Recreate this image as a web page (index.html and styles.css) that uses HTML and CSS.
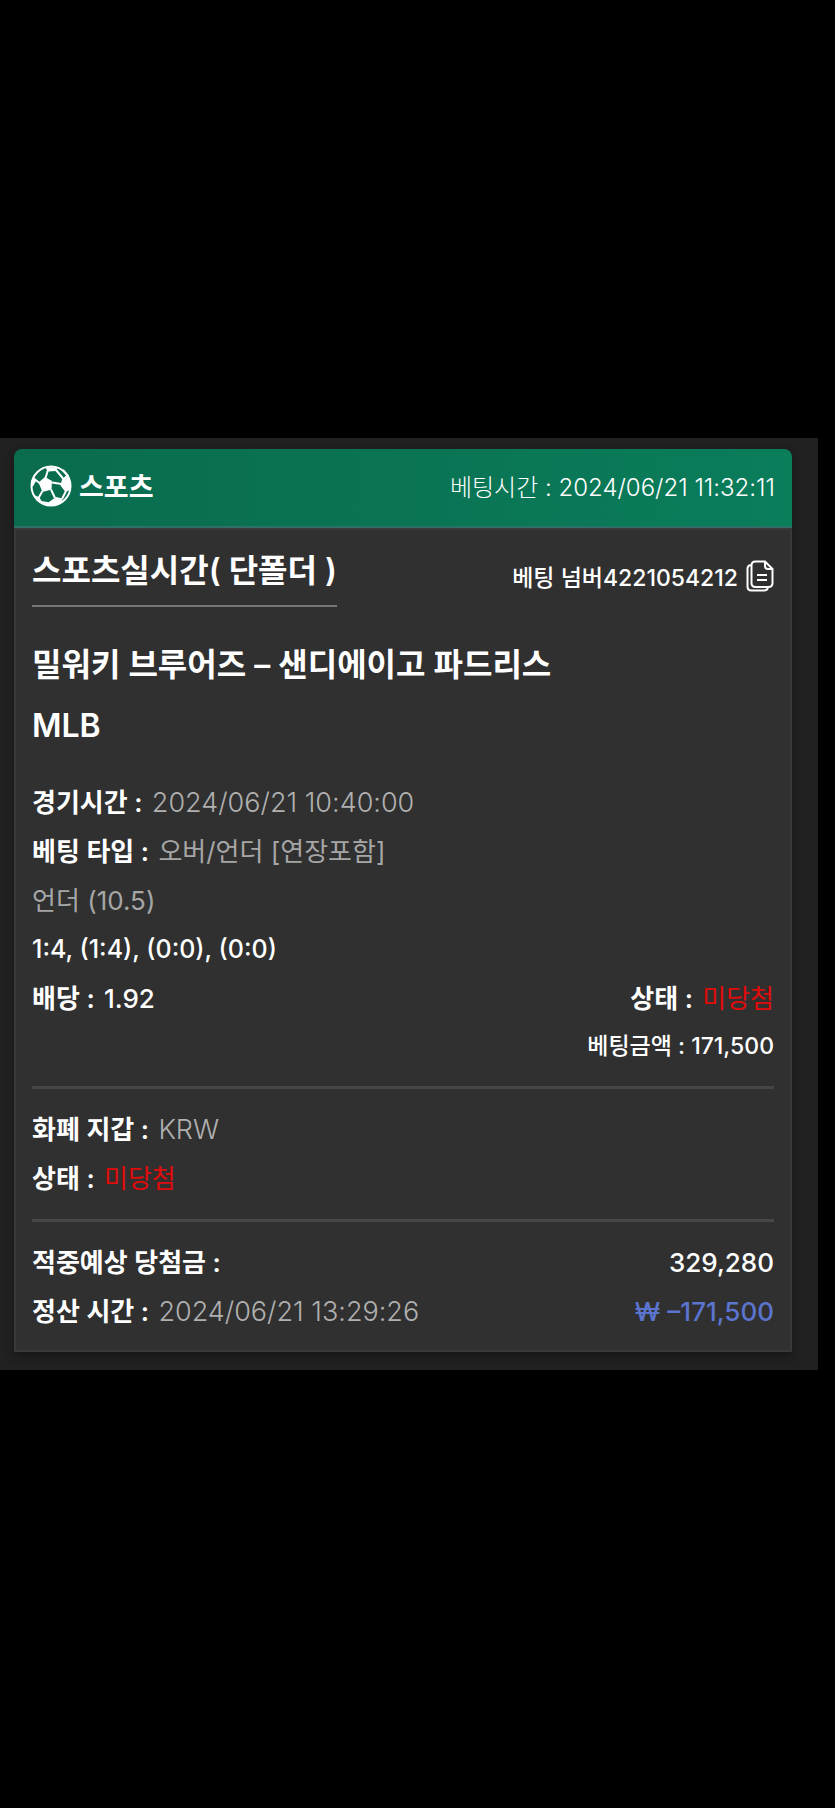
FILE: index.html
```html
<!DOCTYPE html>
<html lang="ko">
<head>
<meta charset="utf-8">
<meta name="viewport" content="width=device-width, initial-scale=1">
<title>베팅 내역</title>
<link rel="stylesheet" href="styles.css">
</head>
<body>
<main class="panel">
  <article class="card">
    <header class="card-header">
      <div class="sport">
        <svg class="ball" viewBox="0 0 42 42" aria-hidden="true">
          <circle class="ball-line" cx="21" cy="21" r="19.5"/>
          <path class="ball-fill" d="M8.500 17.500 15 12 22 16 21.500 24.500 12.500 27zM15 2 28 2.500 26 6 18 6.500zM32 14.500 37.500 9 41 18 40 25 35.500 27 30.500 20.500zM19 37 26 32 32.500 33.500 31 38 22 41 17 40.500zM1 16 4 12 6.500 15 3.500 20.500 1 23zM4 30 9.500 32.500 13 38.500 7 36z"/>
          <path class="ball-line" d="M15.500 13 18 5M22 17.500 31.500 19M21 24.500 25 33M12.500 26 8.500 33M9.500 18 5 14.500M26 5 33.500 14M33 5 38 11M36 26 32 34M11 37 20 38.500"/>
        </svg>
        <span class="sport-name">스포츠</span>
      </div>
      <time class="bet-time">베팅시간 : 2024/06/21 11:32:11</time>
    </header>
    <div class="card-body">
      <div class="heading">
        <h1 class="bet-kind">스포츠실시간( 단폴더 )</h1>
        <div class="bet-number">
          <span>베팅 넘버4221054212</span>
          <button class="copy" type="button" aria-label="복사">
            <svg class="copy-icon" viewBox="0 0 28 32" aria-hidden="true">
              <path d="M9.500 1.500H19L26.500 9V23Q26.500 27 22.500 27H9.500Q5.500 27 5.500 23V5.500Q5.500 1.500 9.500 1.500zM19 1.500V6Q19 9 22 9H26.500M5.500 5Q1.500 5 1.500 9V26.500Q1.500 30.500 5.500 30.500H18Q21.500 30.500 22 27M11 15H21M11 20H21"/>
            </svg>
          </button>
        </div>
      </div>
      <section class="match">
        <h2 class="match-line">밀워키 브루어즈 – 샌디에이고 파드리스</h2>
        <p class="match-line">MLB</p>
      </section>
      <section class="rows">
        <p><b class="label">경기시간 :</b> <time class="value">2024/06/21 10:40:00</time></p>
        <p><b class="label">베팅 타입 :</b> 오버/언더 [연장포함]</p>
        <p>언더 (10.5)</p>
        <p class="score"><b>1:4, (1:4), (0:0), (0:0)</b></p>
        <div class="split">
          <p><b class="label">배당 :</b> <b>1.92</b></p>
          <p><b class="label">상태 :</b> <span class="lost">미당첨</span></p>
        </div>
        <p class="amount"><b>베팅금액 : 171,500</b></p>
      </section>
      <hr class="divider">
      <section class="rows">
        <p><b class="label">화폐 지갑 :</b> <span class="value">KRW</span></p>
        <p><b class="label">상태 :</b> <span class="lost">미당첨</span></p>
      </section>
      <hr class="divider">
      <section class="rows">
        <div class="split">
          <p><b class="label">적중예상 당첨금 :</b></p>
          <p><b>329,280</b></p>
        </div>
        <div class="split">
          <p><b class="label">정산 시간 :</b> <time class="value">2024/06/21 13:29:26</time></p>
          <p><b class="result">₩ –171,500</b></p>
        </div>
      </section>
    </div>
  </article>
</main>
</body>
</html>
```
FILE: styles.css
```css
* {
  box-sizing: border-box;
}

body {
  margin: 0;
  min-height: 100vh;
  display: flex;
  flex-direction: column;
  justify-content: center;
  background: #000;
  color: #fff;
  font-family: Inter, "Noto Sans CJK KR", sans-serif;
  font-size: 26px;
}

h1,
h2,
p {
  margin: 0;
}

.panel {
  margin-right: 17px;
  padding: 11px 26px 18px 14px;
  background: #212121;
}

.card {
  border-radius: 8px 8px 0 0;
  box-shadow: 0 4px 8px #17171b;
}

.card-header {
  display: flex;
  align-items: center;
  justify-content: space-between;
  height: 79px;
  padding: 0 17px 4px 16px;
  border-bottom: 2px solid #2e6f68;
  border-radius: 8px 8px 0 0;
  background: linear-gradient(90deg, #0a6b4e, #0a7d5b);
}

.sport {
  display: flex;
  align-items: center;
  gap: 7px;
}

.ball {
  width: 42px;
  height: 42px;
}

.ball-line {
  fill: none;
  stroke: #fff;
  stroke-width: 2;
}

.ball-fill {
  fill: #fff;
}

.sport-name {
  font-size: 27px;
  font-weight: 600;
}

.bet-time {
  font-size: 24px;
  font-weight: 300;
}

.card-body {
  padding: 14px 16px;
  border: 2px solid #39393c;
  background: #303030;
}

.heading {
  display: flex;
  align-items: center;
  justify-content: space-between;
}

.bet-kind {
  padding-bottom: 7px;
  border-bottom: 2px solid #777;
  font-size: 32px;
  font-weight: 600;
  line-height: 54px;
}

.bet-number {
  display: flex;
  align-items: center;
  gap: 8px;
  font-size: 23px;
  font-weight: 500;
}

.copy {
  display: flex;
  padding: 0;
  border: 0;
  background: none;
  cursor: pointer;
}

.copy-icon {
  width: 28px;
  height: 32px;
  fill: none;
  stroke: #fff;
  stroke-width: 2;
}

.match {
  padding: 27px 0 22px;
}

.match-line {
  font-size: 32px;
  font-weight: 600;
  line-height: 61px;
}

.rows {
  color: #a6a6a6;
  font-weight: 400;
  line-height: 49px;
}

.rows b {
  color: #fff;
  font-weight: 500;
}

.rows .label {
  margin-right: 2px;
  font-weight: 600;
}

.value {
  color: #b0b0b0;
  font-size: 27px;
  font-weight: 300;
  line-height: 1;
}

.score {
  font-size: 25px;
}

.split {
  display: flex;
  justify-content: space-between;
}

.amount {
  font-size: 23px;
  line-height: 47px;
  text-align: right;
}

.lost {
  color: #e00b0b;
}

.rows .result {
  color: #5b75cf;
}

.divider {
  height: 3px;
  margin: 16px 0;
  border: 0;
  background: #464646;
}
```
